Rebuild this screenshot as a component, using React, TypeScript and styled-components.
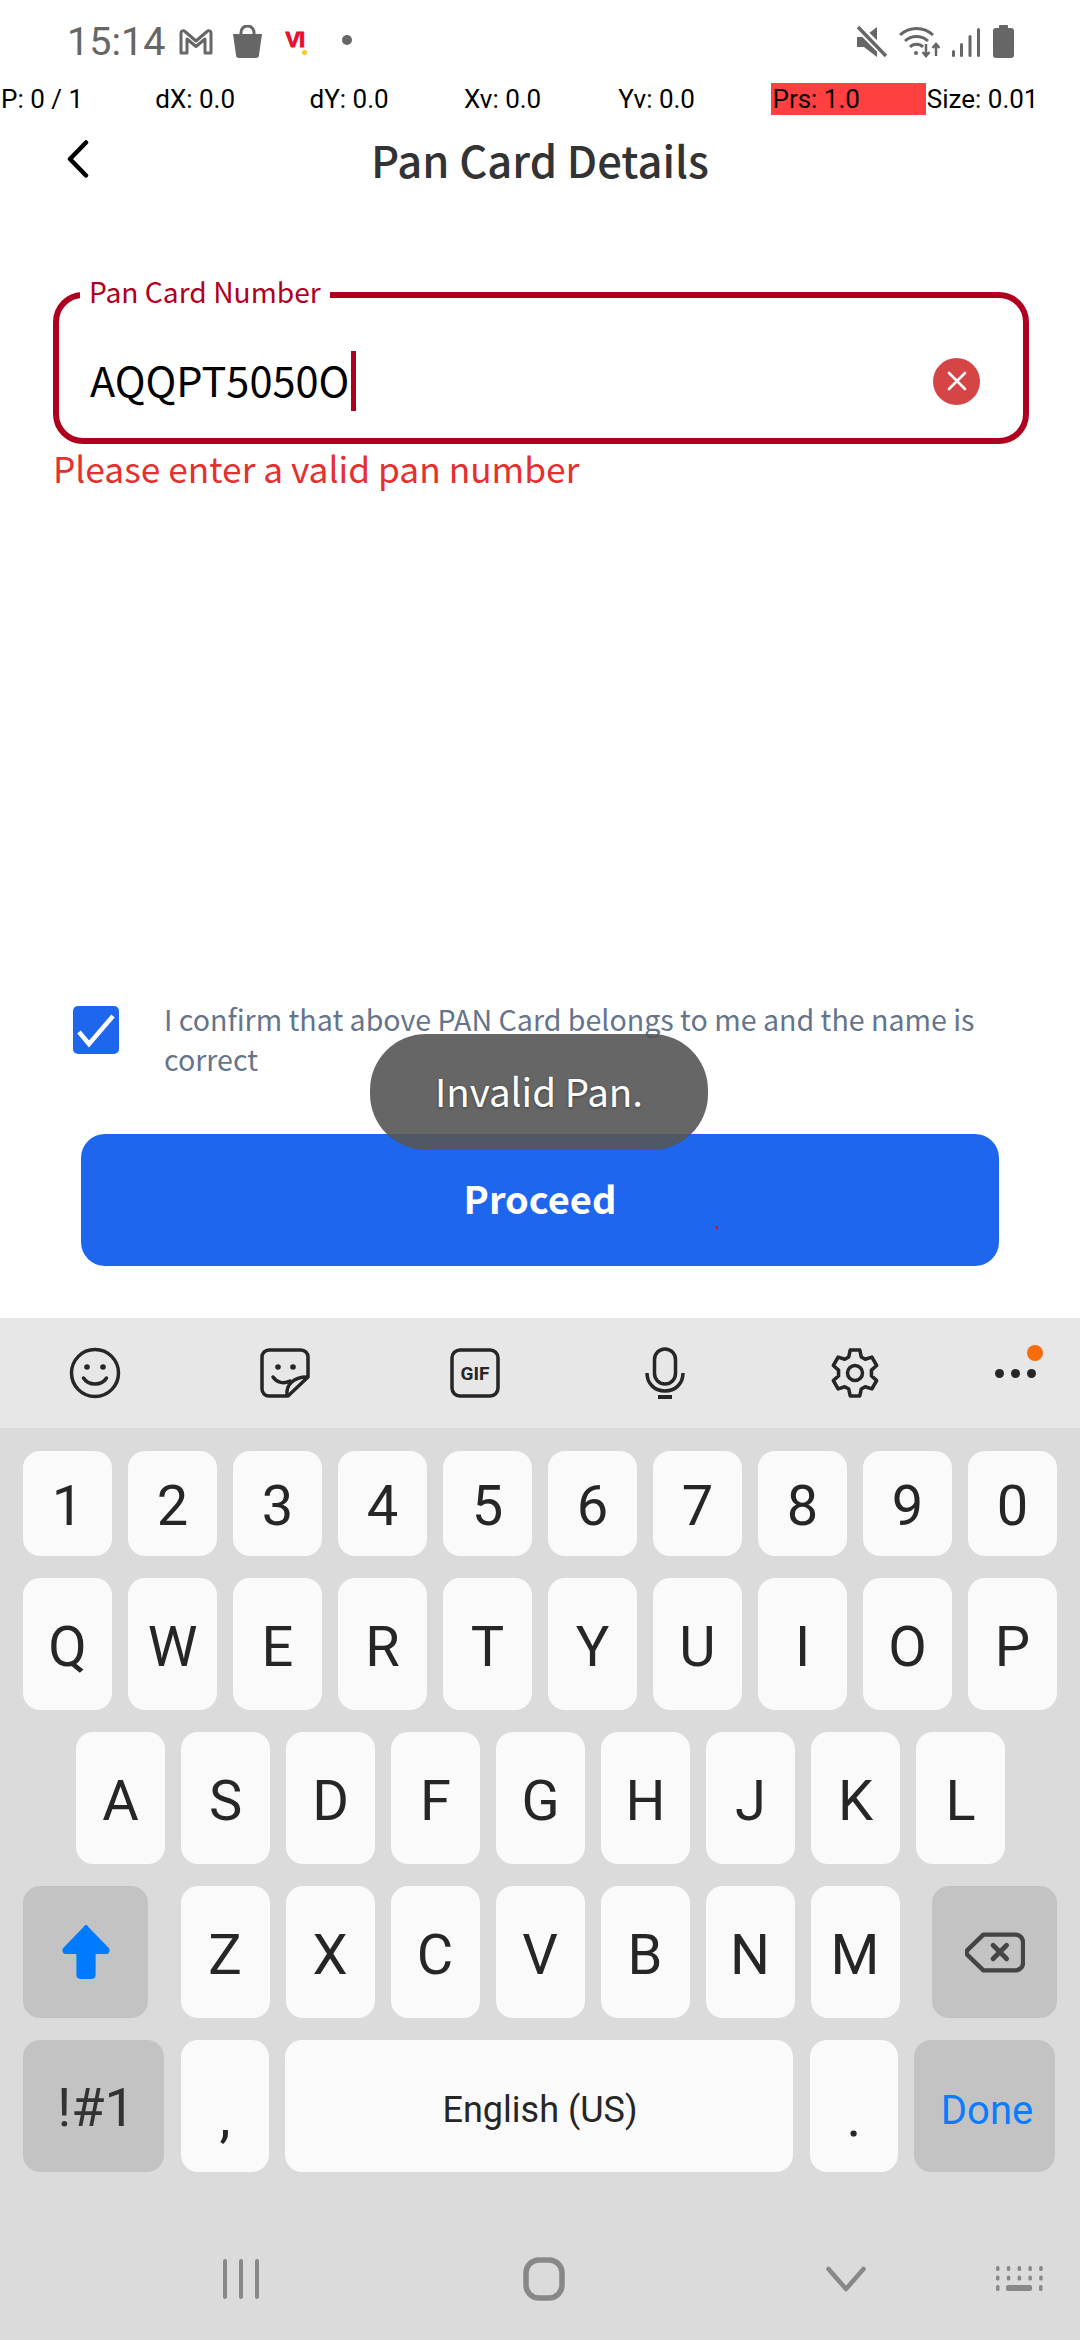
import * as React from 'react';
import styled, { createGlobalStyle } from 'styled-components';

const NOTO = '"Noto Sans CJK SC", "Noto Sans", sans-serif';
const ROBOTO = 'Roboto, "Liberation Sans", sans-serif';

const GRAY = '#666666';
const MAROON = '#b00020';

const debugValues = ['P: 0 / 1', 'dX: 0.0', 'dY: 0.0', 'Xv: 0.0', 'Yv: 0.0', 'Prs: 1.0', 'Size: 0.01'];
const numberRow = ['1', '2', '3', '4', '5', '6', '7', '8', '9', '0'];
const topRow = ['Q', 'W', 'E', 'R', 'T', 'Y', 'U', 'I', 'O', 'P'];
const homeRow = ['A', 'S', 'D', 'F', 'G', 'H', 'J', 'K', 'L'];
const bottomRow = ['Z', 'X', 'C', 'V', 'B', 'N', 'M'];

function StatusLeft() {
  return (
    <S.StatusGroup>
      <S.Clock>15:14</S.Clock>
      <S.MailIcon width="34" height="26" viewBox="0 0 34 26" fill="none" stroke={GRAY} strokeWidth="3" strokeLinejoin="round">
        <path d="M2 24V4c0-2 2.500-3 4-1.500L17 12 28 2.500C29.500 1 32 2 32 4v20h-6V10l-9 7.500L8 10v14z" />
      </S.MailIcon>
      <S.BagIcon width="31" height="33" viewBox="0 0 31 33" fill={GRAY}>
        <path d="M9 12V7.500a6.500 6.500 0 0 1 13 0V12" fill="none" stroke={GRAY} strokeWidth="3" />
        <path d="M1 9h29l-3 21a3 3 0 0 1-3 3H7a3 3 0 0 1-3-3z" />
      </S.BagIcon>
      <S.CarrierLogo>VI</S.CarrierLogo>
      <S.StatusDot />
    </S.StatusGroup>
  );
}

function StatusRight() {
  return (
    <S.StatusGroup>
      <svg width="30" height="32" viewBox="0 0 30 32" style={{ marginRight: 12 }}>
        <path d="M0 11h7L20 1v30L7 21H0z" fill={GRAY} />
        <path d="M0 0l29 29" stroke="#fff" strokeWidth="8" />
        <path d="M1 1l28 29" stroke={GRAY} strokeWidth="3.500" />
      </svg>
      <svg width="41" height="33" viewBox="0 0 41 33" fill="none" stroke={GRAY} strokeWidth="3" style={{ marginRight: 12 }}>
        <path d="M1 10a24 24 0 0 1 33 0M6 16a17 17 0 0 1 23 0M11 22a9 9 0 0 1 13 0" />
        <circle cx="17" cy="28" r="2" fill={GRAY} stroke="none" />
        <path d="M27 19v12M23.500 27l3.500 4 3.500-4M37 31V19M33.500 23l3.500-4 3.500 4" strokeWidth="2.500" />
      </svg>
      <svg width="28" height="30" viewBox="0 0 28 30" fill={GRAY} style={{ marginRight: 13 }}>
        <rect x="0" y="23" width="3" height="7" rx="1.500" />
        <rect x="8" y="16" width="3" height="14" rx="1.500" />
        <rect x="16.500" y="8" width="3" height="22" rx="1.500" />
        <rect x="25" y="1" width="3" height="29" rx="1.500" />
      </svg>
      <svg width="21" height="33" viewBox="0 0 21 33" fill={GRAY}>
        <rect x="6" y="0" width="9" height="5" rx="1" />
        <rect x="0" y="3" width="21" height="30" rx="3" />
      </svg>
    </S.StatusGroup>
  );
}

function Toolbar() {
  const ink = '#262626';
  return (
    <S.Toolbar>
      <S.ToolSlot>
        <svg width="52" height="52" viewBox="0 0 52 52" fill="none" stroke={ink} strokeWidth="3.500">
          <circle cx="26" cy="26" r="23.500" />
          <circle cx="18" cy="20" r="2.800" fill={ink} stroke="none" />
          <circle cx="34" cy="20" r="2.800" fill={ink} stroke="none" />
          <path d="M14.500 31c5 8 18 8 23 0" strokeLinecap="round" />
        </svg>
      </S.ToolSlot>
      <S.ToolSlot>
        <svg width="50" height="50" viewBox="0 0 50 50" fill="none" stroke={ink} strokeWidth="3.500" strokeLinejoin="round">
          <path d="M9 2h32a7 7 0 0 1 7 7v20L28 48H9a7 7 0 0 1-7-7V9a7 7 0 0 1 7-7z" />
          <circle cx="18" cy="19" r="2.800" fill={ink} stroke="none" />
          <circle cx="33" cy="19" r="2.800" fill={ink} stroke="none" />
          <path d="M13 29c4 6 11 7 17 4" strokeLinecap="round" />
          <path d="M27 47c-1-10 6-18 20-18" />
        </svg>
      </S.ToolSlot>
      <S.ToolSlot>
        <svg width="50" height="50" viewBox="0 0 50 50" fill="none" stroke={ink} strokeWidth="3.500">
          <rect x="2" y="2" width="46" height="46" rx="8" />
          <S.GifLabel x="25" y="32" textAnchor="middle">GIF</S.GifLabel>
        </svg>
      </S.ToolSlot>
      <S.ToolSlot>
        <svg width="40" height="52" viewBox="0 0 40 52" fill="none" stroke={ink} strokeWidth="3.500">
          <rect x="9.500" y="2" width="21" height="35" rx="10.500" />
          <path d="M2 26c0 11 8 18 18 18s18-7 18-18" />
          <path d="M13 50h14" strokeWidth="4" />
        </svg>
      </S.ToolSlot>
      <S.ToolSlot>
        <svg width="50" height="50" viewBox="0 0 24 24" fill="none" stroke={ink} strokeWidth="1.700" strokeLinejoin="round">
          <path d="M9.700 1h4.600l.7 3.300 1.900 1.100 3.200-1 2.300 4-2.500 2.200v2.800l2.500 2.200-2.300 4-3.200-1-1.900 1.100-.7 3.300H9.700L9 19.700l-1.900-1.100-3.200 1-2.300-4 2.500-2.200v-2.800L1.600 8.400l2.300-4 3.200 1L9 4.300z" />
          <circle cx="12" cy="12" r="3.600" />
        </svg>
      </S.ToolSlot>
      <S.MoreSlot>
        <S.MoreDot />
        <S.MoreDot />
        <S.MoreDot />
        <S.Notice />
      </S.MoreSlot>
    </S.Toolbar>
  );
}

export default function App() {
  return (
    <>
      <GlobalStyle />
      <S.Page>
        <S.StatusBar>
          <StatusLeft />
          <StatusRight />
        </S.StatusBar>
        <S.DebugRow>
          {debugValues.map((value, i) => (
            <S.DebugCell key={value} $alert={i === 5}>
              {value}
            </S.DebugCell>
          ))}
        </S.DebugRow>
        <S.Header>
          <S.BackButton aria-label="Back">
            <svg width="22" height="38" viewBox="0 0 22 38" fill="none" stroke="#000" strokeWidth="4.500" strokeLinecap="round" strokeLinejoin="round">
              <path d="M19 2.500L3 19l16 16.500" />
            </svg>
          </S.BackButton>
          <S.Title>Pan Card Details</S.Title>
        </S.Header>
        <S.Main>
          <S.Form>
            <S.Field>
              <S.FieldLabel>Pan Card Number</S.FieldLabel>
              <S.FieldValue>AQQPT5050O</S.FieldValue>
              <S.Caret />
              <S.ClearButton aria-label="Clear">
                <svg width="22" height="22" viewBox="0 0 22 22" stroke="#fff" strokeWidth="2.600" strokeLinecap="round">
                  <path d="M3 3l16 16M19 3L3 19" />
                </svg>
              </S.ClearButton>
            </S.Field>
            <S.ErrorText>Please enter a valid pan number</S.ErrorText>
          </S.Form>
          <S.Footer>
            <S.ConfirmRow>
              <S.CheckBox>
                <svg width="46" height="48" viewBox="0 0 46 48" fill="none" stroke="#fff" strokeWidth="4.500">
                  <path d="M6 26l10 12L40 10" />
                </svg>
              </S.CheckBox>
              <S.ConfirmText>I confirm that above PAN Card belongs to me and the name is correct</S.ConfirmText>
            </S.ConfirmRow>
            <S.ProceedButton>
              Proceed
              <S.TouchMark />
            </S.ProceedButton>
          </S.Footer>
        </S.Main>
        <S.Toast>Invalid Pan.</S.Toast>
        <S.Keyboard>
          <Toolbar />
          <S.Keys>
            <S.NumberRow>
              {numberRow.map((k) => (
                <S.Key key={k}>{k}</S.Key>
              ))}
            </S.NumberRow>
            <S.KeyRow>
              {topRow.map((k) => (
                <S.Key key={k}>{k}</S.Key>
              ))}
            </S.KeyRow>
            <S.KeyRow $inset={53}>
              {homeRow.map((k) => (
                <S.Key key={k}>{k}</S.Key>
              ))}
            </S.KeyRow>
            <S.KeyRow $between>
              <S.ActionKey $width={125}>
                <svg width="48" height="56" viewBox="0 0 50 56" fill="#007aff">
                  <path d="M25 0c1.200 0 2 .8 2.500 2L49 24c1.500 3 0 6-3 6H35v22c0 2.500-1.500 4-4 4H19c-2.500 0-4-1.500-4-4V30H4c-3 0-4.500-3-3-6L22.500 2c.5-1.200 1.300-2 2.500-2z" />
                </svg>
              </S.ActionKey>
              <S.LetterGroup>
                {bottomRow.map((k) => (
                  <S.Key key={k}>{k}</S.Key>
                ))}
              </S.LetterGroup>
              <S.ActionKey $width={125}>
                <svg width="60" height="41" viewBox="0 0 62 42" fill="none" stroke="#444" strokeWidth="4.500" strokeLinejoin="round" strokeLinecap="round">
                  <path d="M19 2.500h33a8 8 0 0 1 8 8v21a8 8 0 0 1-8 8H19L3 24c-2-2-2-4 0-6z" />
                  <path d="M29 13.500l14 14M43 13.500l-14 14" strokeWidth="5" />
                </svg>
              </S.ActionKey>
            </S.KeyRow>
            <S.KeyRow>
              <S.SymbolKey>!#1</S.SymbolKey>
              <S.PunctKey>,</S.PunctKey>
              <S.SpaceKey>English (US)</S.SpaceKey>
              <S.PunctKey>.</S.PunctKey>
              <S.DoneKey>Done</S.DoneKey>
            </S.KeyRow>
          </S.Keys>
          <S.NavBar>
            <svg width="38" height="42" viewBox="0 0 38 42" stroke="#888" strokeWidth="4" strokeLinecap="round">
              <path d="M3 3v36M19 3v36M35 3v36" />
            </svg>
            <svg width="42" height="44" viewBox="0 0 42 44" fill="none" stroke="#888" strokeWidth="5.500">
              <rect x="3" y="3" width="36" height="38" rx="13" />
            </svg>
            <svg width="40" height="26" viewBox="0 0 40 26" fill="none" stroke="#888" strokeWidth="4.500" strokeLinecap="round" strokeLinejoin="round">
              <path d="M2.500 3L20 23 37.500 3" />
            </svg>
            <svg width="48" height="28" viewBox="0 0 48 28" fill="#888">
              {[0, 1].map((row) =>
                [0, 1, 2, 3, 4].map((col) => (
                  <rect key={`${row}-${col}`} x={col * 10.8 + 1} y={row * 9.500 + 1} width="3.500" height="5" rx="1.500" />
                )),
              )}
              <rect x="1" y="20" width="3.500" height="6" rx="1.500" />
              <rect x="11" y="20" width="26" height="6" rx="2" />
              <rect x="44" y="20" width="3.500" height="6" rx="1.500" />
            </svg>
          </S.NavBar>
        </S.Keyboard>
      </S.Page>
    </>
  );
}

const GlobalStyle = createGlobalStyle`
  html, body {
    margin: 0;
    padding: 0;
    background: #fff;
  }

  button {
    font: inherit;
    border: 0;
    padding: 0;
    background: none;
  }
`;

const keyBase = `
  display: flex;
  align-items: center;
  justify-content: center;
  flex: none;
  border-radius: 17px;
  font-family: ${ROBOTO};
  color: #262626;
`;

const S = {
  Page: styled.div`
    position: relative;
    width: 1080px;
    height: 2340px;
    display: flex;
    flex-direction: column;
    overflow: hidden;
    background: #fff;
  `,
  StatusBar: styled.div`
    height: 83px;
    padding: 0 66px 0 67px;
    box-sizing: border-box;
    display: flex;
    align-items: center;
    justify-content: space-between;
    flex: none;
  `,
  StatusGroup: styled.div`
    display: flex;
    align-items: center;
  `,
  Clock: styled.span`
    font: 400 39.5px ${ROBOTO};
    color: ${GRAY};
    margin-right: 14px;
  `,
  MailIcon: styled.svg`
    margin-right: 19px;
  `,
  BagIcon: styled.svg`
    margin-right: 22px;
  `,
  CarrierLogo: styled.span`
    position: relative;
    width: 24px;
    font: 900 22px/22px 'Liberation Sans', sans-serif;
    letter-spacing: -1px;
    color: #e60f2d;
    -webkit-text-stroke: 1px #e60f2d;
    margin: 0 33px 4px 0;

    &::after {
      content: '';
      position: absolute;
      left: 17px;
      bottom: -4px;
      width: 5px;
      height: 5px;
      border-radius: 50%;
      background: #fdc82f;
    }
  `,
  StatusDot: styled.span`
    width: 10px;
    height: 10px;
    margin-bottom: 3px;
    border-radius: 50%;
    background: ${GRAY};
  `,
  DebugRow: styled.div`
    display: grid;
    grid-template-columns: repeat(7, 154.3px);
    height: 32px;
    flex: none;
  `,
  DebugCell: styled.div<{ $alert?: boolean }>`
    padding-left: 1px;
    font: 400 26px/32px ${ROBOTO};
    color: #000;
    white-space: nowrap;
    background: ${(p) => (p.$alert ? '#ff4040' : 'transparent')};
  `,
  Header: styled.header`
    display: grid;
    grid-template-columns: 1fr auto 1fr;
    align-items: center;
    height: 92px;
    flex: none;
  `,
  BackButton: styled.button`
    justify-self: start;
    display: flex;
    margin-left: 67px;
    margin-bottom: 4px;
  `,
  Title: styled.h1`
    margin: 0 0 2px 0;
    font: 500 43.5px/1 ${NOTO};
    color: #333;
  `,
  Main: styled.main`
    flex: 1;
    display: flex;
    flex-direction: column;
    justify-content: space-between;
  `,
  Form: styled.div`
    padding: 85px 51px 0 53px;
  `,
  Field: styled.div`
    position: relative;
    height: 152px;
    box-sizing: border-box;
    padding: 0 43px 0 31px;
    border: 6px solid ${MAROON};
    border-radius: 30px;
    display: flex;
    align-items: center;
  `,
  FieldLabel: styled.label`
    position: absolute;
    left: 21px;
    top: -25px;
    padding: 0 9px;
    background: #fff;
    font: 400 28.2px/36px ${NOTO};
    color: ${MAROON};
  `,
  FieldValue: styled.span`
    font: 400 41.5px/60px ${NOTO};
    color: #000;
    margin-top: 22px;
  `,
  Caret: styled.span`
    width: 5px;
    height: 60px;
    margin: 26px 0 0 2px;
    background: ${MAROON};
  `,
  ClearButton: styled.button`
    margin: 26px 0 0 auto;
    width: 47px;
    height: 47px;
    border-radius: 50%;
    background: #d64545;
    display: flex;
    align-items: center;
    justify-content: center;
  `,
  ErrorText: styled.p`
    margin: 2px 0 0;
    font: 400 35.3px/44px ${NOTO};
    color: #e53030;
  `,
  Footer: styled.div`
    padding: 0 81px 52px;
  `,
  ConfirmRow: styled.div`
    display: flex;
    align-items: flex-start;
    gap: 45px;
    margin: 0 10px 55px -8px;
  `,
  CheckBox: styled.span`
    flex: none;
    margin-top: 7px;
    width: 46px;
    height: 48px;
    border-radius: 5px;
    background: #1f66ee;
    display: flex;
  `,
  ConfirmText: styled.p`
    margin: 0;
    font: 400 28.6px/40px ${NOTO};
    color: #64748b;
  `,
  ProceedButton: styled.button`
    position: relative;
    width: 100%;
    height: 132px;
    display: block;
    padding-bottom: 4px;
    border-radius: 24px;
    background: #1f66ee;
    font: 700 38px/1 ${NOTO};
    color: #fff;
  `,
  TouchMark: styled.span`
    position: absolute;
    left: 635px;
    top: 92px;
    width: 2px;
    height: 3px;
    background: #e0003a;
  `,
  Toast: styled.div`
    position: absolute;
    left: 370px;
    top: 1034px;
    width: 338px;
    height: 116px;
    box-sizing: border-box;
    padding-bottom: 4px;
    border-radius: 56px;
    background: rgba(85, 85, 85, 0.9);
    display: flex;
    align-items: center;
    justify-content: center;
    font: 400 38.5px/1 ${NOTO};
    color: #fff;
    text-shadow: 0 1px 3px rgba(0, 0, 0, 0.4);
  `,
  Keyboard: styled.section`
    height: 1022px;
    flex: none;
    display: flex;
    flex-direction: column;
    background: #dbdbdb;
  `,
  Toolbar: styled.div`
    display: grid;
    grid-template-columns: repeat(5, 190px) 130px;
    height: 110px;
    flex: none;
    background: #e7e7e7;
  `,
  ToolSlot: styled.div`
    display: flex;
    align-items: center;
    justify-content: center;
  `,
  GifLabel: styled.text`
    font: 700 19px ${ROBOTO};
    fill: #262626;
    stroke: none;
  `,
  MoreSlot: styled.div`
    position: relative;
    display: flex;
    align-items: center;
    justify-content: center;
    gap: 7px;
  `,
  MoreDot: styled.span`
    width: 9px;
    height: 9px;
    border-radius: 50%;
    background: #262626;
  `,
  Notice: styled.span`
    position: absolute;
    left: 77px;
    top: 27px;
    width: 16px;
    height: 16px;
    border-radius: 50%;
    background: #f96c0c;
  `,
  Keys: styled.div`
    display: flex;
    flex-direction: column;
    gap: 22px;
    padding: 23px 23px 0;
  `,
  NumberRow: styled.div`
    display: flex;
    gap: 16px;
    height: 105px;
  `,
  KeyRow: styled.div<{ $inset?: number; $between?: boolean }>`
    display: flex;
    gap: 16px;
    height: 132px;
    padding-left: ${(p) => p.$inset ?? 0}px;
    justify-content: ${(p) => (p.$between ? 'space-between' : 'flex-start')};
  `,
  LetterGroup: styled.div`
    display: flex;
    gap: 16px;
  `,
  Key: styled.div`
    ${keyBase}
    width: 89px;
    background: #fafafa;
    font-size: 56px;
    padding-top: 5px;
    box-sizing: border-box;
  `,
  ActionKey: styled.div<{ $width: number }>`
    ${keyBase}
    width: ${(p) => p.$width}px;
    background: #c3c3c3;
  `,
  SymbolKey: styled.div`
    ${keyBase}
    width: 141px;
    background: #c3c3c3;
    font-size: 54px;
    color: #333;
    padding: 2px 0 0 5px;
    box-sizing: border-box;
  `,
  PunctKey: styled.div`
    ${keyBase}
    width: 88px;
    margin-left: 1px;
    background: #fafafa;
    font-size: 56px;
    padding-top: 22px;
    box-sizing: border-box;
  `,
  SpaceKey: styled.div`
    ${keyBase}
    width: 508px;
    background: #fafafa;
    font-size: 36px;
    padding: 8px 0 0 2px;
    box-sizing: border-box;
  `,
  DoneKey: styled.div`
    ${keyBase}
    width: 141px;
    background: #c3c3c3;
    font-size: 40px;
    color: #0a7cff;
    padding: 8px 0 0 5px;
    box-sizing: border-box;
  `,
  NavBar: styled.nav`
    flex: 1;
    display: grid;
    grid-template-columns: 301px 303px 169px 48px;
    align-items: center;
    padding: 46px 0 0 222px;
    box-sizing: border-box;
  `,
};
